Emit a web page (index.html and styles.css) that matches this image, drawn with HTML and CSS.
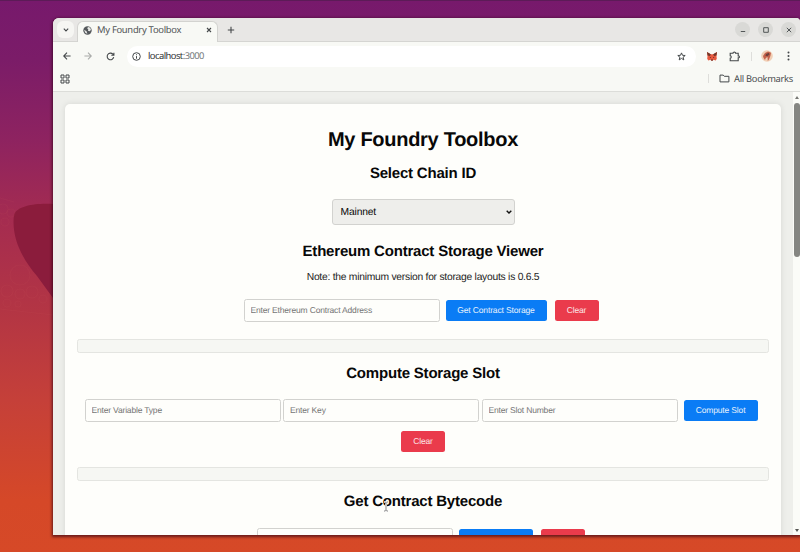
FILE: index.html
```html
<!DOCTYPE html>
<html lang="en">
<head>
<meta charset="utf-8">
<title>My Foundry Toolbox</title>
<link rel="stylesheet" href="styles.css">
</head>
<body>
<svg class="wallpaper" viewBox="0 0 800 552" aria-hidden="true">
  <path d="M53 204C38 203 17 205 14 215C11 238 23 260 37 276L53 298Z" fill="#8b1c3c"/>
  <g fill="none" stroke="#d66060" stroke-opacity=".09">
    <path d="M0 198L14 202M0 309L53 315"/>
    <circle cx="3" cy="209" r="5"/><circle cx="11" cy="213" r="4"/><circle cx="5" cy="222" r="4"/>
    <circle cx="20" cy="275" r="10"/><circle cx="7" cy="291" r="6"/><circle cx="20" cy="294" r="5"/><circle cx="32" cy="292" r="6"/><circle cx="43" cy="299" r="4"/><circle cx="7" cy="303" r="4"/><circle cx="18" cy="304" r="3"/>
  </g>
</svg>
<div class="window">
  <header class="tabstrip">
    <span class="tabsearch"><svg width="6" height="4" viewBox="0 0 6 4"><path d="M.8.7L3 2.9L5.2.7"/></svg></span>
    <div class="tab">
      <svg class="globe" width="9" height="9" viewBox="0 0 9 9"><circle cx="4.5" cy="4.5" r="4.2" fill="#55595c" stroke="none"/><path d="M1 4L3.4 5L4.4 7.7L2.5 7Z M5 .9L4.2 2.6L5.3 3.3L4.9 4.7L7 5.2L8 3.3L6.8 1.4Z" fill="#e8e9e6" stroke="none"/></svg>
      <span class="tabtitle">My Foundry Toolbox</span>
      <svg class="x" width="6" height="6" viewBox="0 0 6 6"><path d="M1 1L5 5M5 1L1 5"/></svg>
    </div>
    <svg class="plus" width="8" height="8" viewBox="0 0 8 8"><path d="M4 .8V7.2M.8 4H7.2"/></svg>
    <div class="controls">
      <span><svg width="6" height="6" viewBox="0 0 6 6"><path d="M.8 4.5H5.2"/></svg></span>
      <span><svg width="6" height="6" viewBox="0 0 6 6"><path d="M.7.7H5.3V5.3H.7Z"/></svg></span>
      <span><svg width="6" height="6" viewBox="0 0 6 6"><path d="M.8.8L5.2 5.2M5.2.8L.8 5.2"/></svg></span>
    </div>
  </header>
  <div class="toolbar">
    <svg class="back" width="8" height="8" viewBox="0 0 8 8"><path d="M7.6 4H.8M4 .7L.7 4L4 7.3"/></svg>
    <svg class="fwd" width="8" height="8" viewBox="0 0 8 8"><path d="M.4 4H7.2M4 .7L7.3 4L4 7.3"/></svg>
    <svg class="reload" width="9" height="9" viewBox="0 0 9 9"><path d="M7.7 5.2A3.3 3.3 0 1 1 6.9 2.2L7.8 3.2M7.9.7V3.3H5.3"/></svg>
    <div class="address">
      <svg width="9" height="9" viewBox="0 0 9 9"><circle cx="4.5" cy="4.5" r="3.8"/><path d="M4.5 4.1V6.7M4.5 2.3V3.2"/></svg>
      <span class="url">localhost<i>:3000</i></span>
      <svg class="star" width="9" height="9" viewBox="0 0 9 9"><path d="M4.5.9L5.5 3.3L8.2 3.5L6.1 5.2L6.8 7.9L4.5 6.4L2.2 7.9L2.9 5.2L.8 3.5L3.5 3.3Z"/></svg>
    </div>
    <svg class="fox" width="10" height="9" viewBox="0 0 10 9"><path d="M0 0L3.8 2.2H6.2L10 0L9.5 4.2L9.8 6.7L8.7 8.6L6.5 7.8L5.8 8.8H4.2L3.5 7.8L1.3 8.6L.2 6.7L.5 4.2Z" fill="#e8593f" stroke="none"/><path d="M0 0L3.8 2.2L3 4L.6 3.6Z M10 0L6.2 2.2L7 4L9.4 3.6Z" fill="#713629" stroke="none"/><path d="M2.5 4.7L4 5.3L3.3 6Z M7.5 4.7L6 5.3L6.7 6Z M4.2 7.4H5.8V8.5H4.2Z" fill="#35262a" stroke="none"/></svg>
    <svg class="puzzle" width="12" height="11" viewBox="0 0 12 11"><path d="M1.2 2.2H4C3.9.7 6.7.7 6.6 2.2H9.2V4.9C10.8 4.7 10.8 7.1 9.2 6.9V9.8H1.2V7.3C2.6 7.1 2.6 5 1.2 4.8Z"/></svg>
    <span class="sep"></span>
    <svg class="avatar" width="12" height="12" viewBox="0 0 12 12"><circle cx="6" cy="6" r="5.8" fill="#f1cfb5" stroke="none"/><path d="M2 6L4 3L7 1.4L10 2.7L9.4 6L8 9.6L6.8 11L6.5 7L4.8 8L4 10L2.6 8Z" fill="#c4614a" stroke="none"/><path d="M5 4L7.8 2.7L8.5 4.4L6.4 6.2L4.4 5.7Z" fill="#6e3f3a" stroke="none"/></svg>
    <svg class="dots" width="3" height="10" viewBox="0 0 3 10"><g fill="#44484a" stroke="none"><circle cx="1.5" cy="1.5" r="1"/><circle cx="1.5" cy="5" r="1"/><circle cx="1.5" cy="8.5" r="1"/></g></svg>
  </div>
  <div class="bookmarks">
    <svg width="10" height="10" viewBox="0 0 10 10"><path d="M1 1H4V4H1ZM6 1H9V4H6ZM1 6H4V9H1ZM6 6H9V9H6Z"/></svg>
    <div class="allmarks"><span class="sep"></span>
      <svg width="11" height="9" viewBox="0 0 11 9"><path d="M1 1.1H4.2L5.3 2.3H9.9V7.9H1Z"/></svg>
      <span class="marklabel">All Bookmarks</span></div>
  </div>
  <div class="viewport">
    <main class="card">
      <h1>My Foundry Toolbox</h1>
      <h2>Select Chain ID</h2>
      <div class="select"><span>Mainnet</span><svg width="6" height="4" viewBox="0 0 6 4"><path d="M.7.7L3 3L5.3.7"/></svg></div>
      <h2>Ethereum Contract Storage Viewer</h2>
      <p class="note">Note: the minimum version for storage layouts is 0.6.5</p>
      <div class="row">
        <input placeholder="Enter Ethereum Contract Address">
        <button class="wide">Get Contract Storage</button>
        <button class="clear">Clear</button>
      </div>
      <div class="result"></div>
      <h2>Compute Storage Slot</h2>
      <div class="row slots">
        <input placeholder="Enter Variable Type">
        <input placeholder="Enter Key">
        <input placeholder="Enter Slot Number">
        <button>Compute Slot</button>
        <button class="clear">Clear</button>
      </div>
      <div class="result"></div>
      <h2>Get Contract Bytecode</h2>
      <div class="row">
        <input>
        <button></button>
        <button class="clear"></button>
      </div>
    </main>
    <div class="scrollbar"><span class="up"></span><span class="thumb"></span><span class="down"></span></div>
  </div>
</div>
<svg class="cursor" width="6" height="11" viewBox="0 0 6 11"><path d="M1 1H2.3L3 1.7L3.7 1H5M3 1.7V9.3M1 10H2.3L3 9.3L3.7 10H5" stroke="#fff" stroke-width="2"/><path d="M1 1H2.3L3 1.7L3.7 1H5M3 1.7V9.3M1 10H2.3L3 9.3L3.7 10H5" stroke="#777" stroke-width=".9"/></svg>
</body>
</html>
```
FILE: styles.css
```css
* { box-sizing: border-box; }
body {
  margin: 0; width: 800px; height: 552px; overflow: hidden; padding: 18px 0 0 53px;
  position: relative;
  font-family: "Liberation Sans", Arial, sans-serif;
  text-rendering: geometricPrecision;
  background: linear-gradient(180deg, #77196c 0, #7b1c68 60px, #8e2360 140px, #a52c50 220px, #b33544 310px, #c54039 400px, #d54828 500px, #d64927 552px);
  border-top: 1px solid #5c1b57;
}
svg { display: block; fill: none; stroke: #44484a; stroke-width: 1.1; flex: none; }
.wallpaper { position: absolute; left: 0; top: -1px; width: 800px; height: 552px; stroke: none; }
.window {
  position: relative; margin-top: -1px; width: 747px; height: 517px; overflow: hidden;
  border-radius: 6px 4px 0 0; background: #f8f9f5;
  box-shadow: 0 1px 3px 1px rgba(45, 0, 20, .65);
}
.tabstrip { display: flex; height: 24px; background: #e8e7e5; border-bottom: 1px solid #d5d5d2; }
.tabsearch { width: 17px; height: 17px; margin: 3px 0 0 4px; border-radius: 6px; background: #f6f6f3; display: grid; place-items: center; }
.tab {
  display: flex; align-items: center; width: 141px; height: 21px; margin: 3px 0 0 3px; padding-left: 5px;
  background: #f8f9f5; border: 1px solid #d3d3d0; border-bottom: 0; border-radius: 6px 6px 0 0;
}
.tab svg { margin-top: -4px; }
.tabtitle { width: 105px; margin-left: 5px; margin-top: -4px; font: 9.4px/12px "Noto Sans", sans-serif; letter-spacing: -.28px; color: #515456; white-space: nowrap; }
.tab .x { margin-left: 4px; }
.plus { margin: 8px 0 0 9px; }
.controls { display: flex; gap: 8px; margin: 4px 4px 0 auto; }
.controls span { width: 15px; height: 15px; border-radius: 50%; background: #d9d9d6; display: grid; place-items: center; }
.controls svg { stroke-width: .9; }
.toolbar { display: flex; align-items: center; height: 28px; padding-left: 10px; }
.fwd { margin-left: 13px; stroke: #aaacaa; }
.reload { margin-left: 14px; }
.address { display: flex; align-items: center; width: 569px; height: 21px; margin-left: 12px; padding: 0 10px 0 5px; background: #fff; border-radius: 11px; }
.address svg { stroke-width: 1; }
.url { margin-left: 7px; font: 9.4px/12px "Noto Sans", sans-serif; letter-spacing: -.55px; color: #303335; }
.url i { font-style: normal; color: #777b7d; }
.star { margin-left: auto; }
.fox { margin-left: 11px; }
.puzzle { margin-left: 12px; }
.sep { width: 1px; height: 9px; background: #dededb; }
.toolbar .sep { margin-left: 10px; }
.avatar { margin-left: 9px; }
.dots { margin-left: 14px; }
.bookmarks { display: flex; align-items: center; justify-content: space-between; height: 22px; padding: 0 7px 5px 7px; border-bottom: 1px solid #dcddd9; }
.bookmarks svg { stroke-width: 1; }
.bookmarks > svg { margin-top: 1px; }
.allmarks { display: flex; align-items: center; padding-top: 1px; }
.allmarks svg { margin: 0 4px 0 10px; }
.marklabel { width: 59px; font: 9.3px/12px "Noto Sans", sans-serif; letter-spacing: -.28px; color: #4b4e50; white-space: nowrap; }
.viewport { display: flex; height: 443px; background: #eeefeb; overflow: hidden; }
.card {
  width: 716px; height: 470px; margin: 12px 12px 0; padding: 24px 12px 0; flex: none;
  background: #fefefb; border-radius: 5px; box-shadow: 0 0 6px rgba(0, 0, 0, .1); color: #080808; text-align: center;
}
h1 { margin: 0; font-size: 20px; line-height: 24px; letter-spacing: -.28px; }
h2 { margin: 12px 0 -1px; font-size: 15px; line-height: 18px; letter-spacing: -.2px; }
h1 + h2 { margin-top: 13px; }
.select {
  display: flex; align-items: center; justify-content: space-between; width: 183px; height: 26px;
  margin: 17px auto 0; padding: 0 2px 0 8px; background: #eeeeeb; border: 1px solid #d2d2cf; border-radius: 3px; font-size: 10.3px; letter-spacing: -.15px;
}
.select svg { stroke: #111; stroke-width: 1.4; }
.select + h2 { margin-top: 18px; }
.note { margin: 12px 0 0; font-size: 10.3px; letter-spacing: -.25px; line-height: 12px; color: #222; }
.row { display: flex; justify-content: center; margin-top: 17px; height: 22px; padding-right: 3px; }
.note + .row { margin-top: 15px; padding-right: 4px; }
input {
  width: 196px; height: 22.5px; padding: 0 6px; border: 1px solid #d2d2cf; border-radius: 2.5px;
  background: #fefefb; font: 8.5px "Liberation Sans", Arial, sans-serif; letter-spacing: -.18px;
  text-rendering: inherit;
}
input::placeholder { color: #757575; opacity: 1; }
input + input { margin-left: 2.5px; }
button {
  width: 74px; height: 21.5px; margin: .5px 0 0 6px; padding: 0; border: 0; border-radius: 2.5px;
  background: #0a7cf5; color: #e6f1fc; font: 8.5px "Liberation Sans", Arial, sans-serif; letter-spacing: -.15px;
  text-rendering: inherit;
}
.wide { width: 101px; }
.clear { width: 44px; margin-left: 8px; background: #ea3b4c; color: #fbe4e6; }
.slots { flex-wrap: wrap; height: 53px; row-gap: 8.5px; align-content: flex-start; padding-right: 4px; }
.slots .clear { position: relative; left: 2px; margin-left: 0; }
.result { height: 14px; margin-top: 18px; background: #f6f7f3; border: 1px solid #e4e5e1; border-radius: 2.5px; }
.slots + .result { margin-top: 15px; }
.result ~ .result ~ .row { margin-top: 18px; padding-right: 4px; }
.scrollbar { display: flex; flex-direction: column; align-items: center; width: 8px; padding: 4px 0 3px 1px; background: #fbfcf8; }
.up, .down { border: 2.5px solid transparent; flex: none; }
.up { border-top: 0; border-bottom: 3px solid #777874; }
.down { margin-top: auto; border-bottom: 0; border-top: 3px solid #555652; }
.thumb { width: 6px; height: 154px; margin-top: 4px; border-radius: 3px; background: #858682; flex: none; }
.cursor { position: absolute; left: 383px; top: 500px; }
```
